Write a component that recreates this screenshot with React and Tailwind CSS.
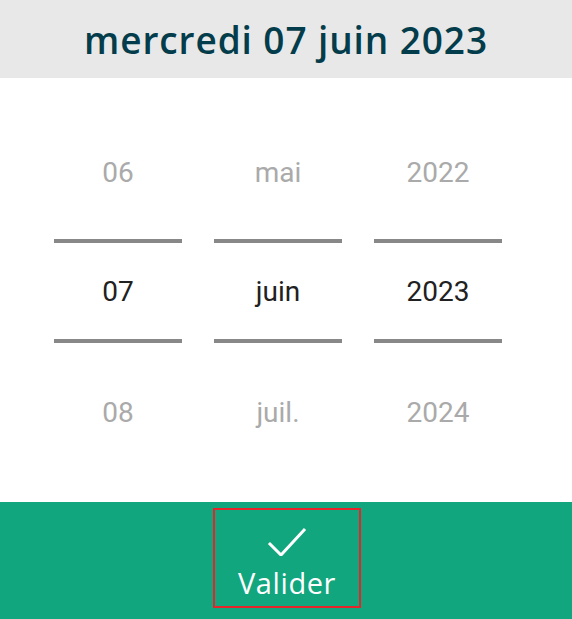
import React from 'react';

const columns = [
  { prev: '06', current: '07', next: '08' },
  { prev: 'mai', current: 'juin', next: 'juil.' },
  { prev: '2022', current: '2023', next: '2024' },
];

const WheelColumn = ({ prev, current, next }) => (
  <div className="flex w-[128px] flex-col items-center pt-[65px]">
    <div className="flex h-[60px] w-full items-center justify-center text-[28px] leading-none text-[#aaaaaa]">{prev}</div>
    <div className="mt-[36px] h-[4px] w-full bg-[#888888]" />
    <div className="flex h-[96px] w-full items-center justify-center pt-[2px] text-[28px] leading-none text-[#212121]">{current}</div>
    <div className="h-[4px] w-full bg-[#888888]" />
    <div className="mt-[40px] flex h-[60px] w-full items-center justify-center text-[28px] leading-none text-[#aaaaaa]">{next}</div>
  </div>
);

export default function App() {
  return (
    <div className="flex h-[619px] w-[572px] flex-col bg-white">
      <div className="flex h-[78px] items-center justify-center bg-[#e8e8e8]">
        <h1 className="text-[37px] font-semibold leading-none tracking-[0.9px] text-[#033c4a]" style={{ fontFamily: '"Open Sans", "Noto Sans", sans-serif' }}>
          mercredi 07 juin 2023
        </h1>
      </div>

      <div className="flex h-[424px] gap-[32px] pl-[54px]" style={{ fontFamily: 'Roboto, "Noto Sans", sans-serif' }}>
        {columns.map((col, i) => (
          <WheelColumn key={i} {...col} />
        ))}
      </div>

      <div className="flex h-[117px] justify-center bg-[#12a67e] pl-[2px] pt-[6px]">
        <button className="flex h-[100px] w-[148px] flex-col items-center border-2 border-[#e8242b] pt-[14px] text-white" style={{ fontFamily: '"Open Sans", "Noto Sans", sans-serif' }}>
          <svg width="42" height="32" viewBox="0 0 42 32" fill="none" stroke="white" strokeWidth="3" strokeLinecap="square">
            <path d="M4 20 L15 31 L38 6" />
          </svg>
          <span className="mt-[12px] text-[29px] leading-none tracking-[0.6px]">Valider</span>
        </button>
      </div>
    </div>
  );
}
